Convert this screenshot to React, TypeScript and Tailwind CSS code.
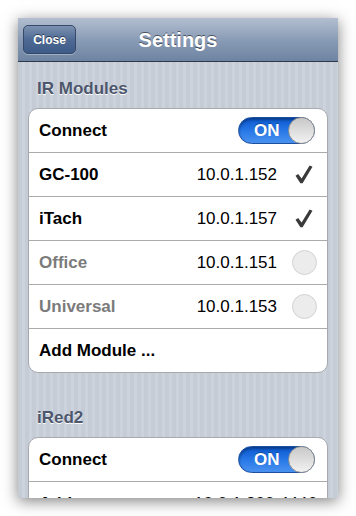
import React from 'react';

type Module = { name: string; ip: string; active: boolean };

const MODULES: Module[] = [
  { name: 'GC-100', ip: '10.0.1.152', active: true },
  { name: 'iTach', ip: '10.0.1.157', active: true },
  { name: 'Office', ip: '10.0.1.151', active: false },
  { name: 'Universal', ip: '10.0.1.153', active: false },
];

const Check = () => (
  <svg width="18" height="19" viewBox="0 0 18 19">
    <path d="M0.5 10.8 L3.2 9 L6.6 13.6 L14.6 0.6 L17.5 1.8 L7.6 18.2 L5.4 18.2 Z" fill="#3a3a3a" />
  </svg>
);

const Toggle = () => (
  <div className="relative flex h-[27px] w-[77px] items-center rounded-full border border-[#1c4f9e] bg-[linear-gradient(#0a58d0,#2a7ae8_55%,#4a92f0)] shadow-[inset_0_2px_3px_rgba(0,0,0,0.35)]">
    <span className="ml-[15px] text-[17px] font-bold text-white [text-shadow:0_-1px_0_rgba(0,0,0,0.3)]">ON</span>
    <div className="absolute right-[-1px] top-[-1px] h-[27px] w-[27px] rounded-full border border-[#8e8e8e] bg-[linear-gradient(#c8c8c8,#f2f2f2)]" />
  </div>
);

const Row = ({ children, first }: { children: React.ReactNode; first?: boolean }) => (
  <div
    className={`flex items-center pl-[10px] pr-[10px] ${first ? 'h-[43px]' : 'h-[44px] border-t border-[#ababab]'}`}
  >
    {children}
  </div>
);

const Header = ({ title }: { title: string }) => (
  <div className="px-[19px] text-[17px] font-bold leading-[20px] text-[#4c566c] [text-shadow:0_1px_0_#ffffff]">
    {title}
  </div>
);

export default function App() {
  return (
    <div className="h-[516px] w-[356px] bg-white p-[18px] font-['Liberation_Sans',Arial,sans-serif]">
      <div className="flex h-[480px] w-[320px] flex-col overflow-hidden bg-[repeating-linear-gradient(90deg,#c5ccd6_0px,#c5ccd6_4px,#cdd3dc_4px,#cdd3dc_7px)] shadow-[0_3px_14px_rgba(0,0,0,0.5)]">
        {/* Nav bar */}
        <div className="relative flex h-[44px] shrink-0 items-center justify-center border-b border-[#2d3848] bg-[linear-gradient(#b3bfd0,#8a9cb6_50%,#6d84a2)]">
          <div className="absolute left-[5px] top-[7px] flex h-[29px] w-[53px] items-center justify-center rounded-[5px] border border-[#37496a] bg-[linear-gradient(#7d92b0,#4e6a95_50%,#3e5b87)] shadow-[0_1px_0_rgba(255,255,255,0.3)]">
            <span className="text-[12px] font-bold text-white [text-shadow:0_-1px_0_rgba(0,0,0,0.5)]">Close</span>
          </div>
          <span className="text-[20px] font-bold text-white [text-shadow:0_-1px_0_rgba(0,0,0,0.5)]">Settings</span>
        </div>

        <div className="flex flex-col pt-[17px]">
          <Header title="IR Modules" />
          <div className="mx-[10px] mt-[9px] overflow-hidden rounded-[10px] border border-[#a6a9ad] bg-white">
            <Row first>
              <span className="flex-1 text-[17px] font-bold text-black">Connect</span>
              <div className="mr-[2px]">
                <Toggle />
              </div>
            </Row>
            {MODULES.map((m) => (
              <Row key={m.name}>
                <span className={`flex-1 text-[17px] font-bold ${m.active ? 'text-black' : 'text-[#7b7b7b]'}`}>
                  {m.name}
                </span>
                <span className="text-[17px] text-black">{m.ip}</span>
                <div className="ml-[14px] flex w-[26px] items-center justify-center">
                  {m.active ? (
                    <Check />
                  ) : (
                    <div className="h-[25px] w-[25px] rounded-full border border-[#d2d2d2] bg-[#ececec]" />
                  )}
                </div>
              </Row>
            ))}
            <Row>
              <span className="text-[17px] font-bold text-black">Add Module ...</span>
            </Row>
          </div>

          <div className="mt-[35px]">
            <Header title="iRed2" />
          </div>
          <div className="mx-[10px] mt-[9px] overflow-hidden rounded-[10px] border border-[#a6a9ad] bg-white">
            <Row first>
              <span className="flex-1 text-[17px] font-bold text-black">Connect</span>
              <div className="mr-[2px]">
                <Toggle />
              </div>
            </Row>
            <Row>
              <span className="flex-1 text-[17px] font-bold text-black">Address</span>
              <span className="text-[17px] text-black">10.0.1.200:4446</span>
            </Row>
          </div>
        </div>
      </div>
    </div>
  );
}
